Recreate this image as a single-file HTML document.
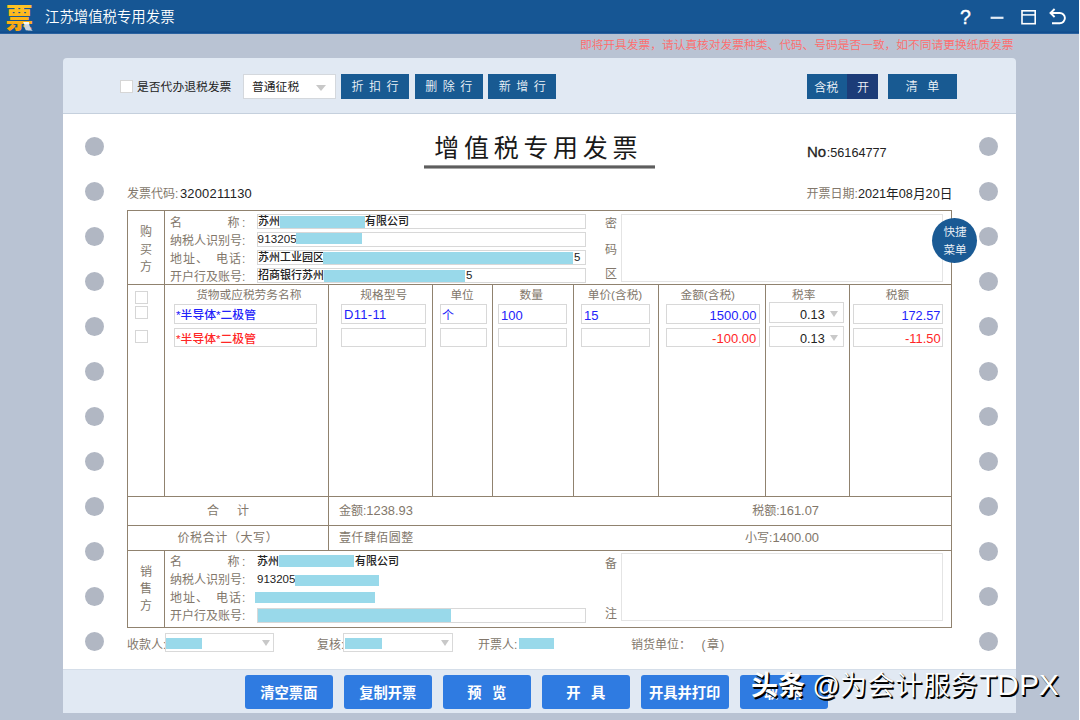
<!DOCTYPE html>
<html lang="zh-CN">
<head>
<meta charset="utf-8">
<title>江苏增值税专用发票</title>
<style>
*{box-sizing:border-box;margin:0;padding:0}
html,body{width:1080px;height:720px;overflow:hidden}
body{position:relative;background:#b9c3d3;font-family:"Liberation Sans","Noto Sans CJK SC",sans-serif;font-size:12px;color:#82776b}
.abs{position:absolute}
.t{position:absolute;white-space:nowrap;line-height:16px;height:16px}
#titlebar{left:0;top:0;width:1079px;height:34px;background:#165694;border-bottom:1px solid #2a62a0;box-shadow:inset 0 -1.5px 0 #114d8d}
#edge{left:1079px;top:0;width:1px;height:720px;background:#fdfdfe}
#apptitle{left:45px;top:8.2px;font-weight:350;font-size:14.4px;line-height:18px;height:18px;color:#fff}
#warn{right:66.5px;top:36.8px;font-size:11.72px;color:#ff6b6b;font-weight:350}
#panel{left:63px;top:57.6px;width:953.2px;height:655.8px;background:#e1e9f3;border-radius:4px 4px 0 0}
#paper{left:63px;top:114px;width:953px;height:555px;background:#fff}
#tbline{left:63px;top:113px;width:953px;height:1px;background:#c5d0dd}
.hole{position:absolute;width:19px;height:19px;border-radius:50%;background:#b1b7c3}
.btn{position:absolute;top:74px;height:25px;background:#185a92;color:#eef3f8;font-size:12px;line-height:27px;font-weight:350;text-align:center;white-space:nowrap}
.sel{position:absolute;background:#fff;border:1px solid #d4d8dd}
.arr{position:absolute;width:0;height:0;border-left:4.5px solid transparent;border-right:4.5px solid transparent;border-top:6px solid #c8c8c8}
.bbtn{position:absolute;top:675px;width:88.2px;height:34px;border-radius:3px;background:#2f7be1;color:#fff;font-weight:bold;font-size:14.3px;line-height:36px;text-align:center;white-space:nowrap}
.hl{position:absolute;height:1px;background:#90826f}
.vl{position:absolute;width:1px;background:#90826f}
.inp{position:absolute;background:#fff;border:1px solid #d8d8d8}
.blk{position:absolute;background:#99d9ea}
.dk{color:#222}
.hd{position:absolute;top:287px;font-size:11.7px;height:16px;line-height:16px;text-align:center;white-space:nowrap}
.cb{position:absolute;width:13px;height:13px;background:#fff;border:1px solid #d6d6d6}
</style>
</head>
<body>
<div id="titlebar" class="abs"></div>
<div id="edge" class="abs"></div>
<div id="logo" class="abs" style="left:5px;top:0;width:32px;height:34px">
<svg width="32" height="34" viewBox="0 0 32 34" style="position:absolute;left:0;top:0">
<defs><linearGradient id="gold" x1="0" y1="0" x2="0" y2="1"><stop offset="0" stop-color="#ffc629"/><stop offset="0.55" stop-color="#fdb315"/><stop offset="1" stop-color="#f59a0c"/></linearGradient></defs>
<text x="0.5" y="28" font-family="'Liberation Sans','Noto Sans CJK SC',sans-serif" font-weight="900" font-size="27.5" fill="url(#gold)">票</text>
<path d="M18.3 21.9 L24 21.9 Q24 27 27.7 30.7 L20.8 30.3 Q18.6 27.5 19.3 23.8 Z" fill="#cfd6df"/>
<path d="M18.3 21.9 L24 21.9 L24.1 24.3 L19.2 24.3 Z" fill="#f6f8fa"/>
</svg></div>
<div id="apptitle" class="t">江苏增值税专用发票</div>
<div id="icons" class="abs" style="left:950px;top:0;width:125px;height:34px">
<div class="t" style="left:10px;top:5px;font-size:19.5px;line-height:24px;height:24px;color:#fff;-webkit-text-stroke:0.35px #fff">?</div>
<svg width="125" height="34" viewBox="950 0 125 34" style="position:absolute;left:0;top:0" fill="none" stroke="#fff">
<path d="M990.6 17.8 H1003.5" stroke-width="2.2" stroke="#e3ebf4"/>
<rect x="1022" y="10.8" width="13.2" height="12.9" stroke-width="1.6"/>
<path d="M1022 14.9 H1035.2" stroke-width="1.5"/>
<path d="M1050.6 13 H1059.8 A5.1 5.1 0 0 1 1059.8 23.2 H1052" stroke-width="1.9"/>
<path d="M1054.6 9 L1050.5 13 L1054.6 17" stroke-width="1.9"/>
</svg></div>
<div id="warn" class="t">即将开具发票，请认真核对发票种类、代码、号码是否一致，如不同请更换纸质发票</div>
<div id="panel" class="abs"></div>
<div id="tbline" class="abs"></div>
<div id="paper" class="abs"></div>

<!-- TOOLBAR -->
<div id="toolbar">
<div class="cb" style="left:119.5px;top:80px"></div>
<div class="t dk" style="left:137px;top:78.8px;font-size:11.8px">是否代办退税发票</div>
<div class="sel" style="left:243px;top:74px;width:93px;height:25px"></div>
<div class="t dk" style="left:252px;top:79px;font-size:11.8px">普通征税</div>
<div class="arr" style="left:316.3px;top:85px;border-left-width:5px;border-right-width:5px;border-top-width:6.5px"></div>
<div class="btn" style="left:341px;width:68px;letter-spacing:5.5px;padding-left:5.5px">折扣行</div>
<div class="btn" style="left:414.6px;width:68.2px;letter-spacing:5.5px;padding-left:5.5px">删除行</div>
<div class="btn" style="left:488.3px;width:68px;letter-spacing:5.5px;padding-left:5.5px">新增行</div>
<div class="btn" style="left:807px;width:41px;text-indent:-2.6px;line-height:28px">含税</div>
<div class="btn" style="left:847px;width:31.2px;background:#1c3c78;text-indent:1px;line-height:28px">开</div>
<div class="btn" style="left:888.4px;width:68.4px;letter-spacing:9.5px;padding-left:9.5px">清单</div>
</div>

<!-- HOLES -->
<div id="holes">
<div class="hole" style="left:84.5px;top:136.5px"></div><div class="hole" style="left:979px;top:136.5px"></div>
<div class="hole" style="left:84.5px;top:181.5px"></div><div class="hole" style="left:979px;top:181.5px"></div>
<div class="hole" style="left:84.5px;top:226.5px"></div><div class="hole" style="left:979px;top:226.5px"></div>
<div class="hole" style="left:84.5px;top:271.5px"></div><div class="hole" style="left:979px;top:271.5px"></div>
<div class="hole" style="left:84.5px;top:316.5px"></div><div class="hole" style="left:979px;top:316.5px"></div>
<div class="hole" style="left:84.5px;top:361.5px"></div><div class="hole" style="left:979px;top:361.5px"></div>
<div class="hole" style="left:84.5px;top:406.5px"></div><div class="hole" style="left:979px;top:406.5px"></div>
<div class="hole" style="left:84.5px;top:451.5px"></div><div class="hole" style="left:979px;top:451.5px"></div>
<div class="hole" style="left:84.5px;top:496.5px"></div><div class="hole" style="left:979px;top:496.5px"></div>
<div class="hole" style="left:84.5px;top:541.5px"></div><div class="hole" style="left:979px;top:541.5px"></div>
<div class="hole" style="left:84.5px;top:586.5px"></div><div class="hole" style="left:979px;top:586.5px"></div>
<div class="hole" style="left:84.5px;top:631.5px"></div><div class="hole" style="left:979px;top:631.5px"></div>
</div>

<!-- INVOICE -->
<div id="invoice">
<div class="t" style="left:434.3px;top:131.3px;font-size:25px;line-height:34px;height:34px;letter-spacing:4.7px;color:#1a1a1a">增值税专用发票</div>
<div class="abs" style="left:424px;top:165px;width:231px;height:4px;background:linear-gradient(#9a9a9a 0,#9a9a9a 25%,#5e5e5e 25%,#5e5e5e 75%,#a8a8a8 75%)"></div>
<div class="t" style="left:807px;top:144px;color:#222"><span style="font-size:15px;-webkit-text-stroke:0.3px #222">No</span><span style="font-size:12.7px;margin-left:0.5px">:56164777</span></div>
<div class="t" style="left:127px;top:186px">发票代码:<span class="dk" style="font-size:12.9px;margin-left:1.6px;letter-spacing:0.22px">3200211130</span></div>
<div class="t" style="right:127.6px;top:186px">开票日期:<span class="dk" style="font-size:12.7px">2021年08月20日</span></div>
<div class="hl" style="left:127px;top:210px;width:825px"></div>
<div class="hl" style="left:127px;top:284px;width:825px"></div>
<div class="hl" style="left:127px;top:496px;width:825px"></div>
<div class="hl" style="left:127px;top:525px;width:825px"></div>
<div class="hl" style="left:127px;top:550px;width:825px"></div>
<div class="hl" style="left:127px;top:627px;width:825px"></div>
<div class="vl" style="left:127px;top:210px;height:418px"></div>
<div class="vl" style="left:951px;top:210px;height:418px"></div>
<div class="vl" style="left:164px;top:210px;height:286px"></div>
<div class="vl" style="left:164px;top:550px;height:78px"></div>
<div class="vl" style="left:328px;top:284px;height:266px"></div>
<div class="vl" style="left:432px;top:284px;height:212px"></div>
<div class="vl" style="left:492px;top:284px;height:212px"></div>
<div class="vl" style="left:573px;top:284px;height:212px"></div>
<div class="vl" style="left:658px;top:284px;height:212px"></div>
<div class="vl" style="left:765px;top:284px;height:212px"></div>
<div class="vl" style="left:849px;top:284px;height:212px"></div>
<div class="t" style="left:140px;top:224.0px">购</div>
<div class="t" style="left:140px;top:241.5px">买</div>
<div class="t" style="left:140px;top:259.0px">方</div>
<div class="t" style="left:170px;top:215px;width:75.3px;text-align:justify;text-align-last:justify">名　　　称:</div>
<div class="inp" style="left:257px;top:214px;width:329px;height:15px"></div>
<div class="t" style="left:170px;top:233px;width:75.3px;text-align:justify;text-align-last:justify">纳税人识别号:</div>
<div class="inp" style="left:257px;top:232px;width:329px;height:15px"></div>
<div class="t" style="left:170px;top:251px;width:75.3px;text-align:justify;text-align-last:justify">地址、　电话:</div>
<div class="inp" style="left:257px;top:250px;width:329px;height:15px"></div>
<div class="t" style="left:170px;top:269px;width:75.3px;text-align:justify;text-align-last:justify">开户行及账号:</div>
<div class="inp" style="left:257px;top:268px;width:329px;height:15px"></div>
<div class="t dk" style="left:258px;top:213px;font-size:11px;font-weight:500">苏州</div>
<div class="blk" style="left:280px;top:215.5px;width:85px;height:12px"></div>
<div class="t dk" style="left:365px;top:213px;font-size:11px;font-weight:500">有限公司</div>
<div class="t dk" style="left:257.6px;top:231px;font-size:11px;font-size:11.6px;letter-spacing:0.1px">913205</div>
<div class="blk" style="left:296px;top:233.3px;width:66px;height:10.8px"></div>
<div class="t dk" style="left:258px;top:249px;font-size:11px;font-weight:500">苏州工业园区</div>
<div class="blk" style="left:323px;top:251.5px;width:250px;height:12px"></div>
<div class="t dk" style="left:574px;top:249px;font-size:11px;font-size:11.5px">5</div>
<div class="t dk" style="left:258px;top:267px;font-size:11px;font-weight:500">招商银行苏州</div>
<div class="blk" style="left:324px;top:269.8px;width:141px;height:12px"></div>
<div class="t dk" style="left:466px;top:267px;font-size:11px;font-size:11.5px">5</div>
<div class="t" style="left:605px;top:216px">密</div>
<div class="t" style="left:605px;top:242px">码</div>
<div class="t" style="left:605px;top:266px">区</div>
<div class="inp" style="left:621px;top:214px;width:322px;height:68px;border-color:#e4e4e4"></div>
<div class="abs" style="left:932.4px;top:218.3px;width:45px;height:45px;border-radius:50%;background:#1a5a94"></div>
<div class="t" style="left:943.5px;top:223.5px;color:#eef3f8;font-weight:350;font-size:11.6px">快捷</div>
<div class="t" style="left:943.5px;top:242.3px;color:#eef3f8;font-weight:350;font-size:11.6px">菜单</div>
<div class="cb" style="left:135px;top:291px;width:13px;height:13px"></div>
<div class="cb" style="left:135px;top:306px;width:13px;height:13px"></div>
<div class="cb" style="left:135px;top:330px;width:13px;height:13px"></div>
<div class="hd" style="left:188.75px;width:120px">货物或应税劳务名称</div>
<div class="hd" style="left:323.75px;width:120px">规格型号</div>
<div class="hd" style="left:402.10px;width:120px">单位</div>
<div class="hd" style="left:471.25px;width:120px">数量</div>
<div class="hd" style="left:555.00px;width:120px">单价(含税)</div>
<div class="hd" style="left:647.75px;width:120px">金额(含税)</div>
<div class="hd" style="left:743.75px;width:120px">税率</div>
<div class="hd" style="left:837.50px;width:120px">税额</div>
<div class="inp" style="left:174px;top:304px;width:143px;height:20px"></div>
<div class="inp" style="left:341px;top:304px;width:85px;height:20px"></div>
<div class="inp" style="left:440px;top:304px;width:47px;height:20px"></div>
<div class="inp" style="left:498px;top:304px;width:69px;height:20px"></div>
<div class="inp" style="left:581px;top:304px;width:69px;height:20px"></div>
<div class="inp" style="left:666px;top:304px;width:94px;height:20px"></div>
<div class="inp" style="left:853px;top:304px;width:90px;height:20px"></div>
<div class="inp" style="left:174px;top:328px;width:143px;height:19px"></div>
<div class="inp" style="left:341px;top:328px;width:85px;height:19px"></div>
<div class="inp" style="left:440px;top:328px;width:47px;height:19px"></div>
<div class="inp" style="left:498px;top:328px;width:69px;height:19px"></div>
<div class="inp" style="left:581px;top:328px;width:69px;height:19px"></div>
<div class="inp" style="left:666px;top:328px;width:94px;height:19px"></div>
<div class="inp" style="left:853px;top:328px;width:90px;height:19px"></div>
<div class="inp" style="left:769px;top:302px;width:75px;height:21px"></div>
<div class="t dk" style="left:800px;top:306.7px;font-size:12.7px">0.13</div>
<div class="arr" style="left:830.3px;top:311px;border-left-width:4.3px;border-right-width:4.3px;border-top-width:6px;border-top-color:#c9c9c9"></div>
<div class="inp" style="left:769px;top:326px;width:75px;height:21px"></div>
<div class="t dk" style="left:800px;top:330.5px;font-size:12.7px">0.13</div>
<div class="arr" style="left:830.3px;top:335px;border-left-width:4.3px;border-right-width:4.3px;border-top-width:6px;border-top-color:#c9c9c9"></div>
<div class="t" style="left:176px;top:307px;font-size:11.8px;font-weight:500;color:#2222fa">*半导体*二极管</div>
<div class="t" style="left:176px;top:331px;font-size:11.8px;font-weight:500;color:#ff2626">*半导体*二极管</div>
<div class="t" style="left:344px;top:306.7px;font-size:13px;letter-spacing:0.3px;color:#2222fa">D11-11</div>
<div class="t" style="left:442px;top:307.5px;font-size:12px;color:#2222fa">个</div>
<div class="t" style="left:501px;top:307.5px;font-size:13px;color:#2222fa">100</div>
<div class="t" style="left:584px;top:307.5px;font-size:13px;color:#2222fa">15</div>
<div class="t" style="right:323.5px;top:307.5px;font-size:13px;color:#2222fa">1500.00</div>
<div class="t" style="right:323.79999999999995px;top:330.6px;font-size:13px;color:#ff2626">-100.00</div>
<div class="t" style="right:139.70000000000005px;top:307.5px;font-size:12.7px;color:#2222fa">172.57</div>
<div class="t" style="right:139.39999999999998px;top:330.6px;font-size:12.9px;color:#ff2626">-11.50</div>
<div class="t" style="left:207px;top:503px">合<span style="display:inline-block;width:18px"></span>计</div>
<div class="t" style="left:339px;top:503px">金额:<span style="font-size:12.9px">1238.93</span></div>
<div class="t" style="right:261px;top:503px">税额:<span style="font-size:12.9px">161.07</span></div>
<div class="t" style="left:177.5px;top:530px;letter-spacing:0.6px">价税合计（大写）</div>
<div class="t" style="left:339px;top:530px;letter-spacing:0.45px">壹仟肆佰圆整</div>
<div class="t" style="right:261px;top:530px">小写:<span style="font-size:12.9px">1400.00</span></div>
<div class="t" style="left:140px;top:564px">销</div>
<div class="t" style="left:140px;top:581px">售</div>
<div class="t" style="left:140px;top:598px">方</div>
<div class="t" style="left:170px;top:553.8px;width:75.3px;text-align:justify;text-align-last:justify">名　　　称:</div>
<div class="t" style="left:170px;top:571.8px;width:75.3px;text-align:justify;text-align-last:justify">纳税人识别号:</div>
<div class="t" style="left:170px;top:589.8px;width:75.3px;text-align:justify;text-align-last:justify">地址、　电话:</div>
<div class="t" style="left:170px;top:607.8px;width:75.3px;text-align:justify;text-align-last:justify">开户行及账号:</div>
<div class="t dk" style="left:257px;top:553px;font-size:11px;font-weight:500">苏州</div>
<div class="blk" style="left:279px;top:555px;width:75px;height:12px"></div>
<div class="t dk" style="left:355px;top:553px;font-size:11px;font-weight:500">有限公司</div>
<div class="t dk" style="left:257px;top:571px;font-size:11px;font-size:11.5px">913205</div>
<div class="blk" style="left:295px;top:575px;width:83.5px;height:10.5px"></div>
<div class="blk" style="left:255px;top:592px;width:120px;height:11px"></div>
<div class="inp" style="left:257px;top:608px;width:329px;height:15px"></div>
<div class="blk" style="left:258px;top:609px;width:193px;height:13px"></div>
<div class="t" style="left:605px;top:555.5px">备</div>
<div class="t" style="left:605px;top:606px">注</div>
<div class="inp" style="left:621px;top:553px;width:322px;height:68px;border-color:#e4e4e4"></div>
<div class="t" style="left:127px;top:636.7px">收款人:</div>
<div class="sel" style="left:165px;top:633px;width:109px;height:19px;border-color:#d9d9d9"></div>
<div class="blk" style="left:166px;top:638.2px;width:36px;height:11px"></div>
<div class="arr" style="left:261.5px;top:640px;border-left-width:4.5px;border-right-width:4.5px;border-top-width:6px"></div>
<div class="t" style="left:317px;top:636.7px">复核:</div>
<div class="sel" style="left:343px;top:633px;width:110.4px;height:19px;border-color:#d9d9d9"></div>
<div class="blk" style="left:345.2px;top:637.5px;width:37px;height:11px"></div>
<div class="arr" style="left:440.5px;top:640px;border-left-width:4.5px;border-right-width:4.5px;border-top-width:6px"></div>
<div class="t" style="left:478px;top:636.7px">开票人:</div>
<div class="blk" style="left:519px;top:638px;width:35px;height:11px"></div>
<div class="t" style="left:631px;top:636.7px">销货单位：</div><div class="t" style="left:701.5px;top:636.7px;letter-spacing:1.4px">(章)</div>
</div>

<!-- BOTTOM -->
<div id="bottom">
<div class="abs" style="left:63px;top:669px;width:953px;height:1px;background:#d5dee9"></div>
<div class="bbtn" style="left:244.75px">清空票面</div>
<div class="bbtn" style="left:343.70px">复制开票</div>
<div class="bbtn" style="left:442.65px">预<span style="display:inline-block;width:10.5px"></span>览</div>
<div class="bbtn" style="left:541.60px">开<span style="display:inline-block;width:10.5px"></span>具</div>
<div class="bbtn" style="left:640.55px">开具并打印</div>
<div class="bbtn" style="left:739.50px">取<span style="display:inline-block;width:10.5px"></span>消</div>
<div class="t" id="wm" style="left:751px;top:665px;height:40px;line-height:40px;font-size:27px;color:#fff;text-shadow:1.5px 1.5px 0 #000,1px 1px 1px #000"><b>头条</b> <span style="font-weight:350">@<span style="letter-spacing:0.65px">为会计服务</span><span style="font-size:30px;margin-left:0.5px;letter-spacing:0.1px">TDPX</span></span></div>
</div>

</body>
</html>
